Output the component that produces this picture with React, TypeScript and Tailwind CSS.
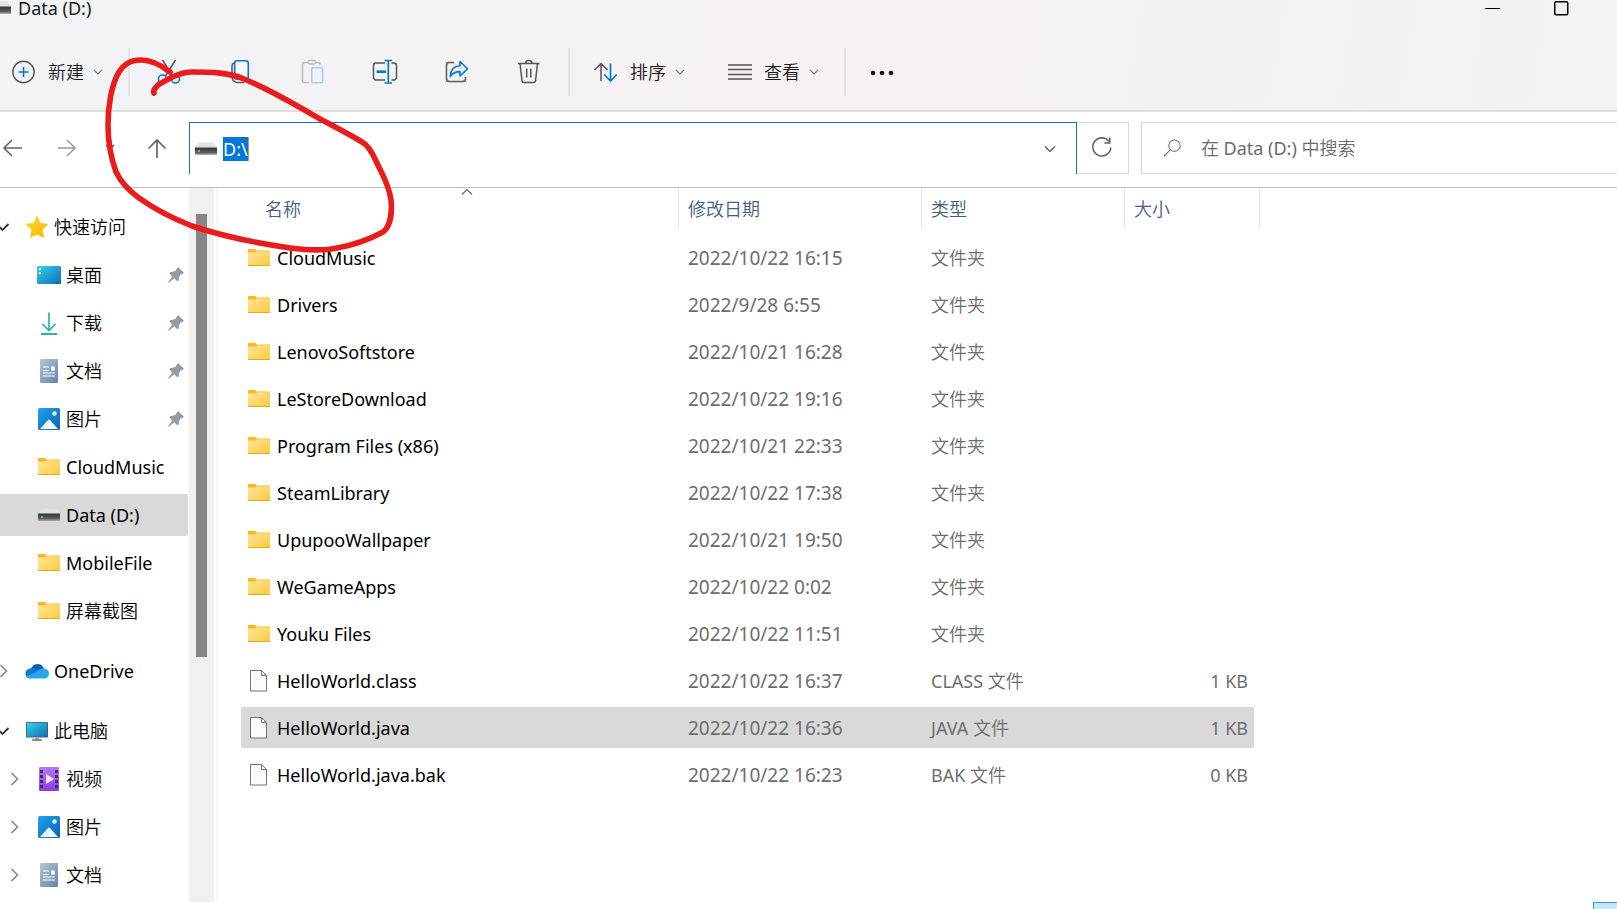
import type { ReactNode } from "react";

type IconName = "star" | "desktop" | "download" | "document" | "picture" | "folder" | "drive" | "cloud" | "pc" | "video" | "file";

type NavItem = {
  label: string;
  icon: IconName;
  level: 0 | 1;
  arrow?: "open" | "closed";
  pinned?: boolean;
  active?: boolean;
};

const navGroups: NavItem[][] = [
  [
    { label: "快速访问", icon: "star", level: 0, arrow: "open" },
    { label: "桌面", icon: "desktop", level: 1, pinned: true },
    { label: "下载", icon: "download", level: 1, pinned: true },
    { label: "文档", icon: "document", level: 1, pinned: true },
    { label: "图片", icon: "picture", level: 1, pinned: true },
    { label: "CloudMusic", icon: "folder", level: 1 },
    { label: "Data (D:)", icon: "drive", level: 1, active: true },
    { label: "MobileFile", icon: "folder", level: 1 },
    { label: "屏幕截图", icon: "folder", level: 1 }
  ],
  [{ label: "OneDrive", icon: "cloud", level: 0, arrow: "closed" }],
  [
    { label: "此电脑", icon: "pc", level: 0, arrow: "open" },
    { label: "视频", icon: "video", level: 1, arrow: "closed" },
    { label: "图片", icon: "picture", level: 1, arrow: "closed" },
    { label: "文档", icon: "document", level: 1, arrow: "closed" }
  ]
];

const files: Array<{ name: string; date: string; type: string; size?: string; selected?: boolean }> = [
  { name: "CloudMusic", date: "2022/10/22 16:15", type: "文件夹" },
  { name: "Drivers", date: "2022/9/28 6:55", type: "文件夹" },
  { name: "LenovoSoftstore", date: "2022/10/21 16:28", type: "文件夹" },
  { name: "LeStoreDownload", date: "2022/10/22 19:16", type: "文件夹" },
  { name: "Program Files (x86)", date: "2022/10/21 22:33", type: "文件夹" },
  { name: "SteamLibrary", date: "2022/10/22 17:38", type: "文件夹" },
  { name: "UpupooWallpaper", date: "2022/10/21 19:50", type: "文件夹" },
  { name: "WeGameApps", date: "2022/10/22 0:02", type: "文件夹" },
  { name: "Youku Files", date: "2022/10/22 11:51", type: "文件夹" },
  { name: "HelloWorld.class", date: "2022/10/22 16:37", type: "CLASS 文件", size: "1 KB" },
  { name: "HelloWorld.java", date: "2022/10/22 16:36", type: "JAVA 文件", size: "1 KB", selected: true },
  { name: "HelloWorld.java.bak", date: "2022/10/22 16:23", type: "BAK 文件", size: "0 KB" }
];

export default function App() {
  return (
    <div className="relative flex min-h-screen flex-col overflow-hidden bg-white font-['Noto_Sans','Noto_Sans_CJK_SC_DemiLight','Noto_Sans_CJK_SC',sans-serif] text-[18px] leading-6 text-black">
      <Gradients />
      <header className="border-b-2 border-[#e0dddf] bg-[linear-gradient(100deg,#f0f4f7_0%,#f4f2f4_24%,#f7f1f1_45%,#f7f1f1_62%,#f4f1f3_76%,#f0f3f5_92%,#f1f3f5_100%)]">
        <div className="flex h-4 items-center justify-between">
          <h1 className="flex items-center gap-[6px] leading-4 text-[#1a1a1a]">
            <span className="flex h-4 w-3 items-center justify-end">
              <ItemIcon name="drive" />
            </span>
            Data (D:)
          </h1>
          <div className="flex items-center gap-[52px] pr-12">
            <button aria-label="最小化">
              <svg className="h-4 w-4" viewBox="0 0 16 16">
                <path d="M0 8.5h15" stroke="#000" />
              </svg>
            </button>
            <button aria-label="最大化">
              <svg className="h-4 w-4" viewBox="0 0 16 16" fill="none">
                <rect x="1.75" y="1.75" width="13" height="13" rx="1.5" stroke="#000" strokeWidth="1.5" />
              </svg>
            </button>
          </div>
        </div>
        <Toolbar />
      </header>

      <AddressRow />

      <main className="flex flex-1">
        <Sidebar />
        <FileList />
      </main>
      <footer className="flex h-[7px] justify-end">
        <div className="w-6 border-l border-t border-[#26a0da] bg-[#c9e7f7]" />
      </footer>

      <Scribble />
    </div>
  );
}

function Toolbar() {
  return (
    <div className="mb-[14px] mt-8 flex h-12 items-center text-[#1a1a1a]">
      <button className="flex items-center pl-3">
        <svg className="mr-3 h-6 w-6" viewBox="0 0 24 24" fill="none" strokeWidth="1.4">
          <circle cx="11.500" cy="12" r="10.7" stroke="#555" />
          <path d="M11.500 7v10M6.500 12h10" stroke="#0078d4" strokeWidth="1.6" />
        </svg>
        新建
        <Chevron />
      </button>
      <Divider className="ml-[25px]" />
      <div className="ml-[3px] flex">
        <ToolButton label="剪切">
          <path d="M6.5 1 16.500 17M19.500 1 9.500 17" stroke="#555" />
          <circle cx="6.500" cy="20" r="4" stroke="#0078d4" strokeWidth="1.6" />
          <circle cx="19.500" cy="20" r="4" stroke="#0078d4" strokeWidth="1.6" />
        </ToolButton>
        <ToolButton label="复制">
          <path d="M6 4C4.500 4.500 4 5.500 4 7v10c0 4.500 2 6.500 6 6.500h6" stroke="#555" />
          <rect x="6.700" y="1.700" width="13.600" height="18.600" rx="2.500" stroke="#0078d4" strokeWidth="1.600" fill="#f6f7f9" />
        </ToolButton>
        <ToolButton label="粘贴">
          <path d="M8 3.500H4A1.500 1.500 0 0 0 2.500 5v17A1.500 1.500 0 0 0 4 23.500h5M15 3.500h3.500A1.500 1.500 0 0 1 20 5v1" stroke="#bdbdbf" strokeWidth="1.600" />
          <rect x="8" y="1.500" width="7.500" height="3.500" rx="1.700" stroke="#bdbdbf" strokeWidth="1.400" />
          <rect x="11.700" y="8.700" width="11" height="15" rx="1.500" stroke="#a3cdf0" strokeWidth="1.600" />
        </ToolButton>
        <ToolButton label="重命名">
          <path d="M13 4H4A2.500 2.500 0 0 0 1.500 6.500v12A2.500 2.500 0 0 0 4 21h9M19.500 4H22a2.500 2.500 0 0 1 2.500 2.500v12A2.500 2.500 0 0 1 22 21h-2.500" stroke="#555" />
          <path d="M16.300 1.500v22.500M12.500 1.500h7.500M12.500 24h7.500" stroke="#0078d4" strokeWidth="1.700" />
          <path d="M4.500 12.700h9.500" stroke="#0078d4" strokeWidth="2.600" />
        </ToolButton>
        <ToolButton label="共享">
          <path d="M10 3.500H5A2.500 2.500 0 0 0 2.500 6v14A2.500 2.500 0 0 0 5 22.500h14a2.500 2.500 0 0 0 2.500-2.500v-2" stroke="#555" />
          <path d="M16 2.500v4.200C10 7 6.500 10.500 6.300 17.500c2.500-3.700 5.500-4.900 9.700-4.900v4.400l7.500-7.200z" stroke="#0078d4" strokeWidth="1.600" strokeLinejoin="round" />
        </ToolButton>
        <ToolButton label="删除">
          <path d="M2 4.500h21.500M9.500 4.500c0-4 6.500-4 6.500 0M4 4.500l2 17.300A2 2 0 0 0 8 23.500h9.500a2 2 0 0 0 2-1.700l2-17.300M10.700 9.500v9M14.800 9.500v9" stroke="#555" />
        </ToolButton>
      </div>
      <Divider className="ml-[3px]" />
      <button className="flex items-center pl-6">
        <svg className="mr-3 h-6 w-6" viewBox="0 0 24 24" fill="none" strokeWidth="1.5">
          <path d="M7 21V3.500M.5 10 7 3.500l6.500 6.500" stroke="#555" />
          <path d="M16.500 3.500V21M10.200 14.500l6.300 6.500 6.300-6.500" stroke="#0078d4" strokeWidth="1.700" />
        </svg>
        排序
        <Chevron />
      </button>
      <button className="flex items-center pl-[43px]">
        <svg className="mr-3 h-6 w-6" viewBox="0 0 24 24">
          <path d="M0 5h24M0 9.500h24M0 14.500h24M0 19h24" stroke="#555" strokeWidth="1.400" />
        </svg>
        查看
        <Chevron />
      </button>
      <Divider className="ml-[25px]" />
      <button aria-label="更多" className="ml-6">
        <svg className="h-6 w-6" viewBox="0 0 24 24" fill="#111">
          <circle cx="3" cy="13" r="2.300" />
          <circle cx="12" cy="13" r="2.300" />
          <circle cx="21" cy="13" r="2.300" />
        </svg>
      </button>
    </div>
  );
}

function ToolButton({ label, children }: { label: string; children: ReactNode }) {
  return (
    <button aria-label={label} className="flex w-[72px] justify-center">
      <svg className="h-[26px] w-[26px]" viewBox="0 0 26 26" fill="none" strokeWidth="1.5">
        {children}
      </svg>
    </button>
  );
}

function Divider({ className }: { className: string }) {
  return <div className={`h-12 w-[2px] bg-[#e3e1e3] ${className}`} />;
}

function Chevron() {
  return (
    <svg className="ml-[9px] h-[10px] w-[10px]" viewBox="0 0 10 10" fill="none">
      <path d="m1 3 4 4 4-4" stroke="#777" strokeWidth="1.100" />
    </svg>
  );
}

function AddressRow() {
  return (
    <div className="flex items-center border-b border-[#bdbdbd] pb-[13px] pt-[10px]">
      <div className="flex w-[189px] shrink-0 items-center">
        <button aria-label="后退" className="ml-[2px]">
          <svg className="h-5 w-5" viewBox="0 0 20 20" fill="none" stroke="#666" strokeWidth="1.600">
            <path d="M20 10H2M10 2l-8 8 8 8" />
          </svg>
        </button>
        <button aria-label="前进" className="ml-[35px]">
          <svg className="h-5 w-5" viewBox="0 0 20 20" fill="none" stroke="#999" strokeWidth="1.500">
            <path d="M1 10h17M10 2l8 8-8 8" />
          </svg>
        </button>
        <button aria-label="最近浏览的位置" className="ml-[28px]">
          <svg className="h-[10px] w-[10px]" viewBox="0 0 10 10" fill="none">
            <path d="m1 2 4 4 4-4" stroke="#555" strokeWidth="1.500" />
          </svg>
        </button>
        <button aria-label="上移" className="ml-[32px]">
          <svg className="h-5 w-5" viewBox="0 0 20 20" fill="none" stroke="#666" strokeWidth="1.700">
            <path d="M10 20V2M1.500 10.500 10 2l8.500 8.500" />
          </svg>
        </button>
      </div>
      <div className="flex h-[52px] min-w-0 flex-[893] items-center border-x border-t border-[#0f74c8] pl-1 pr-5">
        <ItemIcon name="drive" />
        <input
          aria-label="地址"
          defaultValue="D:\"
          className="ml-[5px] h-6 w-[26px] border-r border-[#f08a3a] bg-[#0078d7] text-white outline-none"
        />
        <button aria-label="以前的位置" className="ml-auto">
          <svg className="h-3 w-3" viewBox="0 0 12 12" fill="none">
            <path d="m1 3.500 5 5 5-5" stroke="#555" strokeWidth="1.200" />
          </svg>
        </button>
      </div>
      <button aria-label="刷新" className="flex h-[52px] w-[52px] shrink-0 items-center justify-center border-y border-r border-[#d9d9d9]">
        <svg className="h-6 w-6" viewBox="0 0 24 24" fill="none" stroke="#666" strokeWidth="1.600">
          <path d="M19 5.500A9 9 0 1 0 20.800 11.500M19.800 1.500V7h-5.500" />
        </svg>
      </button>
      <label className="ml-3 flex h-[52px] flex-[471] items-center border-y border-l border-[#d9d9d9] pl-[21px]">
        <svg className="mr-5 h-5 w-5" viewBox="0 0 20 20" fill="none" stroke="#777" strokeWidth="1.200">
          <circle cx="12.500" cy="7.500" r="6.200" />
          <path d="M8 12 1 19" />
        </svg>
        <input
          aria-label="搜索"
          placeholder="在 Data (D:) 中搜索"
          className="h-6 w-full outline-none placeholder:text-[#6b6b6b]"
        />
      </label>
    </div>
  );
}

function Sidebar() {
  return (
    <aside className="flex w-[218px] shrink-0">
      <nav aria-label="导航窗格" className="flex w-[189px] flex-col gap-3 pb-[3px] pr-px pt-[15px]">
        {navGroups.map((group, index) => (
          <ul key={index}>
            {group.map((item) => (
              <li key={item.label} className="py-[3px]">
                <a href="#" className={`flex h-[42px] items-center rounded-r-[2px] pr-1 ${item.active ? "bg-[#d9d9d9]" : ""}`}>
                  <span className={`flex shrink-0 justify-end ${item.level === 0 ? "mr-[15px] w-[10px]" : "mr-4 w-[21px]"}`}>
                    {item.arrow && <TreeArrow open={item.arrow === "open"} />}
                  </span>
                  <span className="mr-[5px] flex w-6 shrink-0 justify-center">
                    <ItemIcon name={item.icon} />
                  </span>
                  <span className="whitespace-nowrap">{item.label}</span>
                  {item.pinned && <Pin />}
                </a>
              </li>
            ))}
          </ul>
        ))}
      </nav>
      <div className="w-[25px] bg-[#f0f0f0] pt-[26px]">
        <div className="mx-[7px] h-[443px] bg-[#858585]" />
      </div>
      <div className="ml-[2px] w-[2px] bg-[#f6f6f6]" />
    </aside>
  );
}

function TreeArrow({ open }: { open: boolean }) {
  return (
    <svg className="h-[14px] w-3 shrink-0" viewBox="0 0 12 14" fill="none">
      {open ? (
        <path d="m0 5.500 4.500 4.500 6-6" stroke="#333" strokeWidth="1.800" />
      ) : (
        <path d="m2.500 1 6 6-6 6" stroke="#8a8a8a" strokeWidth="1.700" />
      )}
    </svg>
  );
}

function Pin() {
  return (
    <svg className="ml-auto h-4 w-4" viewBox="0 0 16 16" fill="#929ca3">
      <path d="M10.200.3 15.700 5.600 14.800 7l-2.300.6-1.600 2.600-.2 3.300-1.100 1-3.400-3.300L1.200 15.500.2 15.700.5 14.600 4.400 9.500 1.300 6.300l1-1.200 3.200-.3L8.300 3l.5-2.100z" />
    </svg>
  );
}

function FileList() {
  return (
    <section className="min-w-0 flex-1 pl-[23px]">
      <table className="w-[1019px] table-fixed border-collapse text-left">
        <colgroup>
          <col className="w-[438px]" />
          <col className="w-[243px]" />
          <col className="w-[203px]" />
          <col className="w-[135px]" />
        </colgroup>
        <thead className="text-[#44607c]">
          <tr>
            <HeadCell className="pl-6">
              名称
              <svg className="absolute left-[220px] top-0 h-2 w-3" viewBox="0 0 12 8" fill="none">
                <path d="m1 6.500 5-5 5 5" stroke="#666" strokeWidth="1.100" />
              </svg>
            </HeadCell>
            <HeadCell className="pl-[9px]">修改日期</HeadCell>
            <HeadCell className="pl-[9px]">类型</HeadCell>
            <HeadCell className="pl-[9px]">大小</HeadCell>
          </tr>
        </thead>
        <tbody>
          {files.map((file) => {
            const bg = file.selected ? "bg-[#d9d9d9]" : "";
            return (
              <tr key={file.name} className="text-[#6d6d6d]">
                <td className="p-0 py-[3px]">
                  <div className={`flex h-[41px] items-center gap-[6px] rounded-l-[2px] pl-[6px] text-black ${bg}`}>
                    <span className="flex w-6 justify-center">
                      <ItemIcon name={file.size ? "file" : "folder"} />
                    </span>
                    {file.name}
                  </div>
                </td>
                <td className="p-0 py-[3px]">
                  <div className={`flex h-[41px] items-center pl-[9px] text-[19px] ${bg}`}>{file.date}</div>
                </td>
                <td className="p-0 py-[3px]">
                  <div className={`flex h-[41px] items-center pl-[9px] ${bg}`}>{file.type}</div>
                </td>
                <td className="py-[3px] pl-0 pr-[6px]">
                  <div className={`flex h-[41px] items-center justify-end rounded-r-[2px] pr-[6px] ${bg}`}>{file.size}</div>
                </td>
              </tr>
            );
          })}
        </tbody>
      </table>
    </section>
  );
}

function HeadCell({ className, children }: { className: string; children: ReactNode }) {
  return (
    <th className="p-0 font-normal">
      <div className={`relative mb-[6px] flex h-10 items-center border-r border-[#e2e2e2] pt-[2px] ${className}`}>{children}</div>
    </th>
  );
}

function Gradients() {
  return (
    <svg className="absolute h-0 w-0" aria-hidden="true">
      <defs>
        <linearGradient id="folderFill" x1="0" y1="0" x2="1" y2="1">
          <stop offset="0" stopColor="#ffe69c" />
          <stop offset="1" stopColor="#ffc93c" />
        </linearGradient>
        <linearGradient id="screenFill" x1="0" y1="0" x2="1" y2="1">
          <stop offset="0" stopColor="#35d3e3" />
          <stop offset="1" stopColor="#0f6cbd" />
        </linearGradient>
        <linearGradient id="pictureFill" x1="0" y1="0" x2="1" y2="1">
          <stop offset="0" stopColor="#1fa5ea" />
          <stop offset="1" stopColor="#0a63b8" />
        </linearGradient>
        <linearGradient id="docFill" x1="0" y1="0" x2="1" y2="1">
          <stop offset="0" stopColor="#b3c6da" />
          <stop offset="1" stopColor="#6683a6" />
        </linearGradient>
        <linearGradient id="videoFill" x1="0" y1="0" x2="0" y2="1">
          <stop offset="0" stopColor="#b57bf0" />
          <stop offset="1" stopColor="#8a3fe0" />
        </linearGradient>
        <linearGradient id="starFill" x1="0" y1="0" x2="1" y2="1">
          <stop offset="0" stopColor="#ffda2e" />
          <stop offset="1" stopColor="#fbb400" />
        </linearGradient>
        <linearGradient id="driveFill" x1="0" y1="0" x2="0" y2="1">
          <stop offset="0" stopColor="#333" />
          <stop offset="1" stopColor="#6e6e6e" />
        </linearGradient>
      </defs>
    </svg>
  );
}

function ItemIcon({ name }: { name: IconName }) {
  return (
    <svg className="h-6 w-6 shrink-0" viewBox="0 0 24 24" fill="none" aria-hidden="true">
      {iconShapes[name]}
    </svg>
  );
}

const iconShapes: Record<IconName, ReactNode> = {
  star: (
    <path
      d="m12 1.300 3.300 7 7.500 1-5.500 5.300 1.400 7.900L12 19.200l-6.700 3.300 1.400-7.900L1.200 9.300l7.500-1z"
      fill="url(#starFill)"
      stroke="#fcc11a"
      strokeWidth=".6"
      strokeLinejoin="round"
    />
  ),
  desktop: (
    <>
      <rect y="3" width="24" height="18" rx="1.300" fill="url(#screenFill)" />
      <path d="M2 5h2v2H2zM2 9h2v2H2z" fill="#d8f7fb" />
      <path d="M19 20h1M21 20h1M23 20h1" stroke="#0a4a86" />
    </>
  ),
  download: (
    <>
      <path d="M12 1.500v18M5.500 13l6.500 6.500 6.500-6.500" stroke="#29b992" strokeWidth="1.700" />
      <path d="M4 23h16" stroke="#15ab9a" strokeWidth="1.800" />
    </>
  ),
  document: (
    <>
      <rect x="3" width="18" height="24" rx="1.300" fill="url(#docFill)" />
      <path d="M6 8h6M6 11.500h6M6 14h12M6 17h12" stroke="#fff" strokeWidth="1.200" />
      <path d="M14 7.500h4v4h-4z" fill="#fff" />
    </>
  ),
  picture: (
    <>
      <rect x="1" y="1" width="22" height="22" rx="1.500" fill="url(#pictureFill)" />
      <path d="m3 22 8-9q1-1.200 2 0l8 9z" fill="#eef5fb" />
      <circle cx="17.500" cy="6.500" r="2.200" fill="#f0f7fd" />
    </>
  ),
  folder: (
    <>
      <path d="M1 3.800C1 3.300 1.300 3 1.800 3h6.400l1.600 1.500H23V19H1z" fill="#fbb91c" />
      <path d="M1 6.500h7.500l1.300-1.300H23V20H1z" fill="url(#folderFill)" />
      <path d="M1 19.500h22" stroke="#e8a91d" />
    </>
  ),
  drive: (
    <>
      <path d="M5 5.500h14l4 5H1z" fill="#dfe1e4" />
      <path d="M1 10.500h22v7H1z" fill="url(#driveFill)" />
      <path d="M1 17h22" stroke="#999" />
      <path d="M4 13h2v2H4z" fill="#2fe03a" />
    </>
  ),
  cloud: (
    <>
      <path d="M6 10c2-5.500 9-7 12.500-1.500L19 12 9 15z" fill="#0364b8" />
      <path d="M6 9.300c2-.3 3.800.2 5.500 1.200L17 14l-12 5.500C-1 19-1.500 10 6 9.300z" fill="#0f78d4" />
      <path d="M17.500 9.500c4-.5 6.500 2 6.500 5 0 2.500-1.800 5-4.500 5H5c-1.500 0-3-.8-3.800-2l9.800-4.500c2-1.500 4-3.200 6.500-3.500z" fill="#28a8ea" />
    </>
  ),
  pc: (
    <>
      <rect x="1" y="3" width="22" height="15.500" rx=".8" fill="#4a5a66" />
      <rect x="1.800" y="3.800" width="20.400" height="13.900" fill="url(#screenFill)" />
      <path d="M10 18.500h4v2h-4z" fill="#9aa1a6" />
      <path d="M7 21h10" stroke="#5a6268" strokeWidth="1.400" />
    </>
  ),
  video: (
    <>
      <rect x="2" width="20" height="24" rx="1.300" fill="url(#videoFill)" />
      <path d="M4.500 3v19M19.500 3v19" stroke="#4c2378" strokeWidth="3" strokeDasharray="3 2" />
      <path d="m9 7 8 5-8 5z" fill="#f3ebfc" />
    </>
  ),
  file: (
    <>
      <path d="M3.500 1.500h11l5 5v15.500h-16z" fill="#fafafb" stroke="#747474" />
      <path d="M14.500 1.500v5h5" stroke="#747474" />
    </>
  )
};

// Freehand marker circle drawn over the address bar
function Scribble() {
  return (
    <svg
      className="pointer-events-none absolute left-0 top-0 h-[260px] w-[420px]"
      viewBox="0 0 420 260"
      fill="none"
      stroke="#e81c1c"
      strokeWidth="5.600"
      strokeLinecap="round"
      strokeLinejoin="round"
      aria-hidden="true"
    >
      <path d="M170 72C157 62 149 60 141 60C130 60 124 64 119 72C111 85 108 108 108 125C108 140 111 158 116 172C121 182 128 190 139 198C156 210 174 219 192 226C222 236 256 243 290 248C306 250 324 251 337 248C354 245 370 239 383 232C391 226 392 211 391 200C389 184 381 172 376 161C372 152 368 145 362 142C349 134 335 127 320 119C296 105 271 90 244 79C227 72 210 72 192 72C180 72 168 79 158 85C155 88 153 90 154 93" />
    </svg>
  );
}
